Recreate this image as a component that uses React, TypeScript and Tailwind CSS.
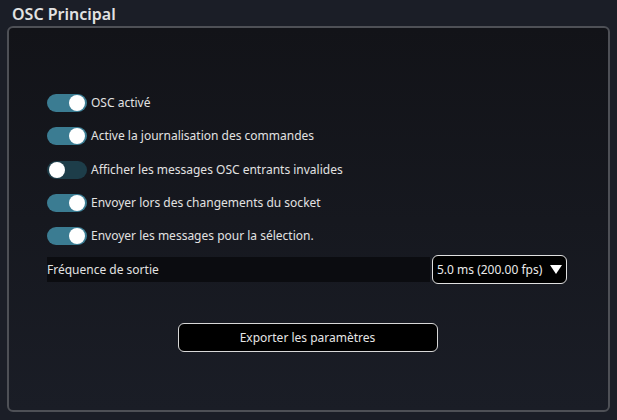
import { useState } from 'react';

const options = [
  { label: 'OSC activé', on: true },
  { label: 'Active la journalisation des commandes', on: true },
  { label: 'Afficher les messages OSC entrants invalides', on: false },
  { label: 'Envoyer lors des changements du socket', on: true },
  { label: 'Envoyer les messages pour la sélection.', on: true },
];

const Toggle = ({ on, onClick }: { on: boolean; onClick: () => void }) => (
  <button
    onClick={onClick}
    className={`flex items-center w-[40px] h-[18px] rounded-full px-[2px] ${
      on ? 'bg-[#3b7c92] justify-end' : 'bg-[#1d3d49] justify-start'
    }`}
  >
    <span className="block w-[16px] h-[16px] rounded-full bg-white" />
  </button>
);

const App = () => {
  const [toggles, setToggles] = useState(options.map((o) => o.on));

  return (
    <div className="w-[617px] h-[420px] bg-[#1b1e27] text-[#e2e2e2] font-['Noto_Sans',sans-serif] flex flex-col px-[7px] pb-[8px]">
      {/* Title */}
      <h1 className="text-[16px] font-semibold leading-[26px] pl-[5px] pt-[1px] h-[26px]">OSC Principal</h1>

      {/* Panel */}
      <div className="flex-1 rounded-[6px] border-2 border-[#4e5056] bg-gradient-to-b from-[#121318] to-[#1a1d26] pt-[66px] px-[38px]">
        <div className="flex flex-col gap-[15.25px]">
          {options.map((o, i) => (
            <div key={o.label} className="flex items-center gap-[4px] h-[18px]">
              <Toggle
                on={toggles[i]}
                onClick={() => setToggles(toggles.map((t, j) => (j === i ? !t : t)))}
              />
              <span className="text-[12px] leading-none">{o.label}</span>
            </div>
          ))}
        </div>

        {/* Output frequency */}
        <div className="flex items-center mt-[10px] w-[520px]">
          <div className="flex-1 h-[25px] bg-[#0b0c10] flex items-center text-[12px]">Fréquence de sortie</div>
          <button className="ml-[2px] w-[135px] h-[29px] rounded-[6px] border border-[#e0e0e0] bg-black flex items-center gap-[8px] pl-[4px] text-[12px] text-[#eaeaea]">
            <span>5.0 ms (200.00 fps)</span>
            <svg width="12" height="9" viewBox="0 0 12 9">
              <polygon points="0,0 12,0 6,9" fill="#ffffff" />
            </svg>
          </button>
        </div>

        {/* Export */}
        <div className="flex justify-center mt-[39px] pr-[2px]">
          <button className="w-[260px] h-[29px] rounded-[6px] border border-[#d8d8d8] bg-black text-[12px] text-[#e6e6e6]">
            Exporter les paramètres
          </button>
        </div>
      </div>
    </div>
  );
};

export default App;
